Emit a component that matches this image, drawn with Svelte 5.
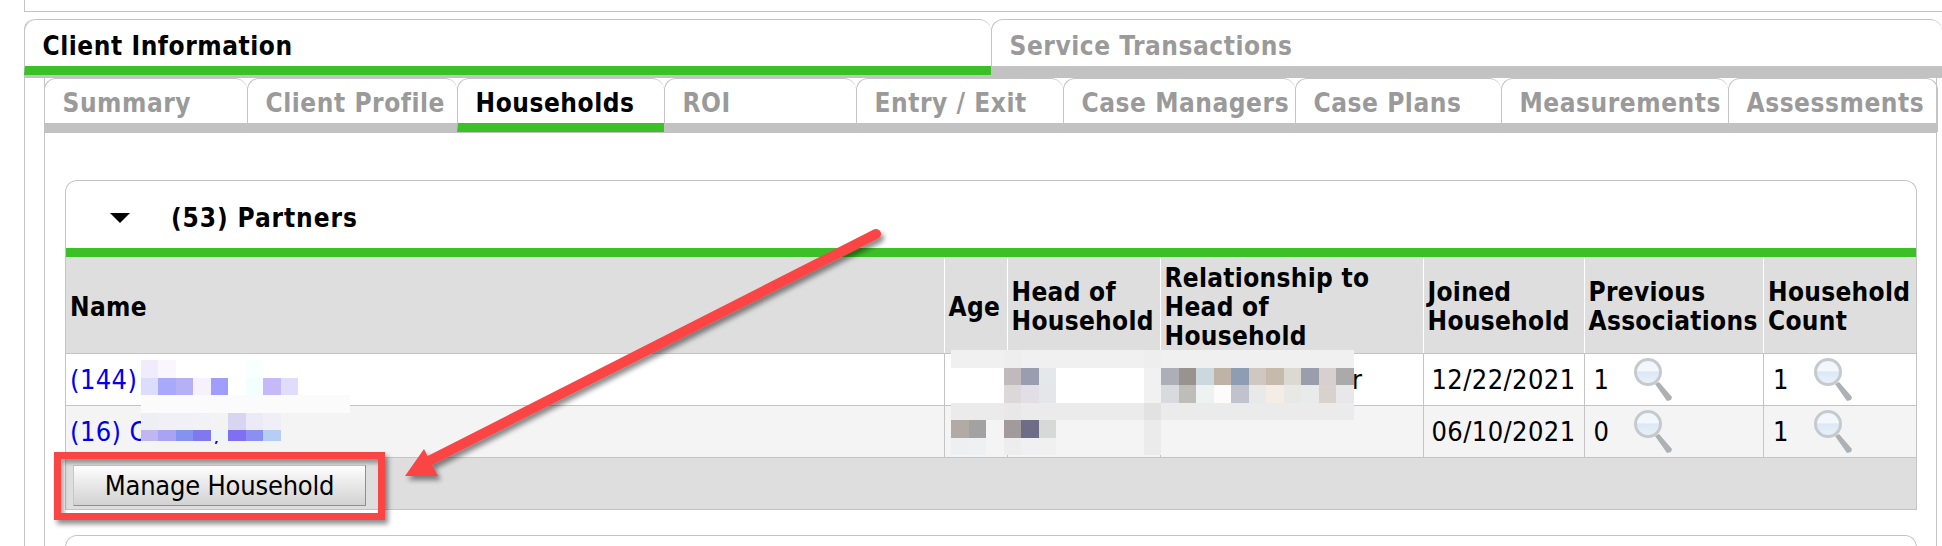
<script>
	const outerTabs = [
		{ label: "Client Information", width: 967, active: true },
		{ label: "Service Transactions", width: 951 }
	];
	const innerTabs = [
		{ label: "Summary", width: 203 },
		{ label: "Client Profile", width: 210 },
		{ label: "Households", width: 207, active: true },
		{ label: "ROI", width: 192 },
		{ label: "Entry / Exit", width: 207 },
		{ label: "Case Managers", width: 232 },
		{ label: "Case Plans", width: 206 },
		{ label: "Measurements", width: 227 },
		{ label: "Assessments", width: 210 }
	];
	const columns = [
		{ lines: ["Name"], width: 878 },
		{ lines: ["Age"], width: 63 },
		{ lines: ["Head of", "Household"], width: 153 },
		{ lines: ["Relationship to", "Head of", "Household"], width: 263 },
		{ lines: ["Joined", "Household"], width: 161 },
		{ lines: ["Previous", "Associations"], width: 179.5 },
		{ lines: ["Household", "Count"], width: 152.5 }
	];
	const rows = [
		{ name: "(144)", relation: "r", joined: "12/22/2021", previous: 1, count: 1 },
		{ name: "(16) C", comma: true, relation: "", joined: "06/10/2021", previous: 0, count: 1 }
	];

	// pixelated patches that hide the names
	const w = "#ffffff";
	const g = "#f4f4f4";
	const nameBlur = [
		["#f1ecfb", "#faf6fd", w, w, w, w, "#f8ffff", w, w, w, w, w],
		["#dcdcfb", "#a9a9fb", "#b6b0f5", "#f6f1fc", "#a09efc", w, "#f3ffff", "#c6b9fa", "#e0dcfb", w, w, w],
		Array(12).fill("#fbfbfb"),
		["#eeeef5", "#f0f0f6", "#f0f0f6", "#f1f1f6", "#f3f3f3", "#d8d5f2", "#ebeaf6", "#f0eff8", g, g, g, g],
		["#c0b6f0", "#a9a3f3", "#8593f0", "#7f78ef", "#edf5f6", "#7e6ff3", "#8a90f2", "#b8cdf3", null, null, null, null]
	];
	const e0 = "#f0f0f0";
	const e1 = "#ebebeb";
	const detailBlur = [
		[e0, e0, e0, "#eeeeee", e0, e0, e0, e0, e0, e0, e0, "#eeeeee", e0, e0, e0, e0, e0, e0, e0, e0, e0, e0, e0],
		[w, w, w, "#c0babc", "#9a9cb0", "#e3e8e8", w, w, w, w, w, "#f1f1f1", "#aeafb6", "#98938f", "#cbd8de", "#bfb3a8", "#8e9db4", "#cfc8c0", "#c6baac", "#dcd8d2", "#9a9dac", "#d8d0d0", "#aaaaaa"],
		[w, w, w, "#dcd8da", "#e1dee6", "#e5e6e9", w, w, w, w, w, "#f1f1f1", "#d9dade", "#bebdba", "#eef2f1", "#fdfcfa", "#c0c3cd", "#e8eaea", "#f4ede6", "#e8e9e7", "#e8ebea", "#d8d2cf", "#e8e8ea"],
		[e1, e1, e1, "#e8e8e8", e1, e1, e1, e1, e1, e1, e1, "#e2e2e2", e1, e1, e1, e1, e1, e1, e1, e1, e1, e1, e1],
		["#b1aaa5", "#a2a2a2", g, "#a39a9c", "#6f6c88", "#d7d9d8", g, g, g, g, g, e1, g, g, g, g, g, g, g, g, g, g, g],
		["#eeeff1", "#eef0f2", g, "#ededed", "#f0f0f3", "#f0f0f0", g, g, g, g, g, e1, g, g, g, g, g, g, g, g, g, g, g]
	];
</script>

{#snippet magnifier()}
	<svg class="lens" width="40" height="44" viewBox="0 0 40 44">
		<polygon points="21,26 25,24 38,39 37,42 33,43" fill="#aeb1b3" />
		<circle cx="14" cy="14" r="12.5" fill="url(#glass)" stroke="#c6cacd" stroke-width="3" />
	</svg>
{/snippet}

{#snippet blur(cells, cls)}
	<div class="blur {cls}">
		{#each cells as line}
			{#each line as color}
				<i style:background={color}></i>
			{/each}
		{/each}
	</div>
{/snippet}

<div class="page">
	<div class="topbox"></div>

	<div class="outer">
		<div class="tabs big">
			{#each outerTabs as tab}
				<div class="tab" class:active={tab.active} style:width="{tab.width}px">{tab.label}</div>
			{/each}
		</div>

		<div class="inner">
			<div class="tabs small">
				{#each innerTabs as tab}
					<div class="tab" class:active={tab.active} style:width="{tab.width}px">{tab.label}</div>
				{/each}
			</div>

			<div class="content">
				<section class="panel">
					<header class="panel-head">
						<span class="caret"></span>
						<h2>(53) Partners</h2>
					</header>
					<table>
						<colgroup>
							{#each columns as col}
								<col style:width="{col.width}px" />
							{/each}
						</colgroup>
						<thead>
							<tr>
								{#each columns as col}
									<th>
										{#each col.lines as line}
											<div>{line}</div>
										{/each}
									</th>
								{/each}
							</tr>
						</thead>
						<tbody>
							{#each rows as row}
								<tr>
									<td><a href="#top">{row.name}{#if row.comma}<span class="comma">,</span>{/if}</a></td>
									<td></td>
									<td></td>
									<td class="relation">{row.relation}</td>
									<td class="date">{row.joined}</td>
									<td><div class="count">{row.previous}{@render magnifier()}</div></td>
									<td><div class="count">{row.count}{@render magnifier()}</div></td>
								</tr>
							{/each}
						</tbody>
					</table>
					<div class="panel-foot">
						<button>Manage Household</button>
					</div>
				</section>
				<section class="panel next"></section>
			</div>
		</div>
	</div>

	{@render blur(nameBlur, "names")}
	{@render blur(detailBlur, "details")}

	<div class="callout"></div>
	<svg class="arrow" width="1942" height="546" viewBox="0 0 1942 546">
		<defs>
			<linearGradient id="glass" x1="0" y1="0" x2="0" y2="1">
				<stop offset="0" stop-color="#eef5fc" />
				<stop offset="0.45" stop-color="#f4f8fc" />
				<stop offset="0.5" stop-color="#dbe8f6" />
				<stop offset="1" stop-color="#eaf2fa" />
			</linearGradient>
			<filter id="shade" x="-5%" y="-5%" width="110%" height="115%">
				<feDropShadow dx="3" dy="4" stdDeviation="2.5" flood-color="#000" flood-opacity="0.45" />
			</filter>
		</defs>
		<g filter="url(#shade)" fill="#fb4444">
			<line x1="876" y1="234" x2="425" y2="463" stroke="#fb4444" stroke-width="10" stroke-linecap="round" />
			<polygon points="405,476 424,449 438,476" />
		</g>
	</svg>
</div>

<style>
	:global(body) {
		margin: 0;
		background: #fff;
		overflow: hidden;
	}
	.page {
		position: relative;
		width: 1942px;
		height: 546px;
		overflow: hidden;
		font-family: "DejaVu Sans Condensed", "DejaVu Sans", sans-serif;
		color: #000;
	}
	.topbox {
		height: 11px;
		margin-left: 24px;
		border-left: 1.5px solid #c4c4c4;
		border-bottom: 1.5px solid #c4c4c4;
	}
	.outer {
		margin: 7px 0 0 24px;
		padding-left: 19px;
		border-left: 1.5px solid #c4c4c4;
		border-radius: 10px 0 0 0;
		height: 600px;
	}
	.tabs {
		display: flex;
		font-weight: 700;
		box-sizing: border-box;
		font-size: 26px;
		letter-spacing: 0.55px;
		line-height: 30px;
	}
	.tab {
		box-sizing: border-box;
		flex: none;
		color: #9a9a9a;
		border-top: 1.5px solid #c4c4c4;
		border-left: 1.5px solid #c4c4c4;
		border-bottom: 9px solid #c2c2c2;
		border-radius: 12px 12px 0 0;
		white-space: nowrap;
	}
	.tab.active {
		color: #000;
		border-bottom-color: #3cc027;
	}
	.big {
		margin-left: -20.5px;
		width: 1930px;
		border-bottom: 3px solid #c2c2c2;
	}
	.big .tab {
		height: 56px;
		padding: 11px 0 0 18px;
	}
	.big .tab:first-child {
		border-bottom-left-radius: 0;
	}
	.inner {
		width: 1893px;
		box-sizing: border-box;
		border-left: 1.5px solid #c4c4c4;
		border-right: 1.5px solid #c4c4c4;
		height: 600px;
	}
	.small {
		margin-left: -1.5px;
		width: 1893px;
		border-bottom: 1px solid #c2c2c2;
	}
	.small .tab {
		height: 54px;
		padding: 9px 0 0 18px;
	}
	.small .tab:last-child {
		border-right: 1.5px solid #c4c4c4;
	}
	.content {
		padding: 47px 19px 0 20px;
	}
	.panel {
		border: 1.5px solid #c4c4c4;
		border-bottom: none;
		border-radius: 12px 12px 0 0;
	}
	.panel-head {
		height: 76px;
		display: flex;
		align-items: center;
		gap: 41px;
		padding: 6px 0 0 44px;
		box-sizing: border-box;
		border-bottom: 9px solid #3cc027;
	}
	.caret {
		width: 0;
		height: 0;
		border-left: 10px solid transparent;
		border-right: 10px solid transparent;
		border-top: 10px solid #000;
	}
	h2 {
		margin: 0;
		font-size: 26px;
		font-weight: 700;
		letter-spacing: 0.9px;
	}
	table {
		width: 100%;
		table-layout: fixed;
		border-collapse: collapse;
		font-size: 27px;
		letter-spacing: 0.4px;
	}
	th {
		background: #dedede;
		height: 96px;
		padding: 5px 4px 0;
		box-sizing: border-box;
		text-align: left;
		font-size: 26px;
		letter-spacing: 0.3px;
		line-height: 29px;
		font-weight: 700;
		border-left: 1.5px solid #fff;
		border-bottom: 1.5px solid #c4c4c4;
		vertical-align: middle;
		white-space: nowrap;
	}
	th:first-child {
		border-left: none;
	}
	td {
		height: 52px;
		padding: 1px 4px 0;
		box-sizing: border-box;
		border-left: 1.5px solid #c4c4c4;
		border-bottom: 1.5px solid #c4c4c4;
		white-space: nowrap;
	}
	td:first-child {
		border-left: none;
	}
	tbody tr:nth-child(even) td {
		background: #f4f4f4;
	}
	td:last-child {
		border-right: 1.5px solid #c4c4c4;
	}
	a {
		color: #0000ee;
		text-decoration: none;
	}
	.comma {
		margin-left: 66px;
	}
	.relation {
		text-align: right;
		padding-right: 60px;
	}
	.date {
		padding-left: 8px;
	}
	.count {
		display: flex;
		align-items: center;
		gap: 25px;
		padding-left: 5px;
	}
	.lens {
		display: block;
	}
	.panel-foot {
		height: 52px;
		background: #dedede;
		border-bottom: 1.5px solid #c4c4c4;
		padding: 7px 0 0 7px;
		box-sizing: border-box;
	}
	button {
		display: block;
		width: 293px;
		height: 41px;
		padding: 0;
		font-family: inherit;
		font-size: 27px;
		letter-spacing: -0.2px;
		color: #000;
		border: 1.5px solid #c6c6c6;
		border-right-color: #8f8f8f;
		border-bottom-color: #8f8f8f;
		background: linear-gradient(#ffffff, #f0f0f0 30%, #d2d2d2);
		border-radius: 0;
	}
	.next {
		margin-top: 25px;
		height: 40px;
	}
	.blur {
		position: absolute;
		display: grid;
		grid-auto-rows: 17.5px;
		overflow: hidden;
	}
	.blur.names {
		left: 141px;
		top: 360px;
		height: 81px;
		grid-template-columns: repeat(12, 17.45px);
	}
	.blur.details {
		left: 951px;
		top: 350px;
		grid-template-columns: repeat(23, 17.5px);
	}
	.callout {
		position: absolute;
		left: 54px;
		top: 452px;
		width: 331px;
		height: 68px;
		box-sizing: border-box;
		border: 7px solid #fb4444;
		box-shadow: 3px 4px 5px rgba(0, 0, 0, 0.45), inset 3px 4px 4px rgba(0, 0, 0, 0.35);
	}
	.arrow {
		position: absolute;
		left: 0;
		top: 0;
		pointer-events: none;
	}
</style>
